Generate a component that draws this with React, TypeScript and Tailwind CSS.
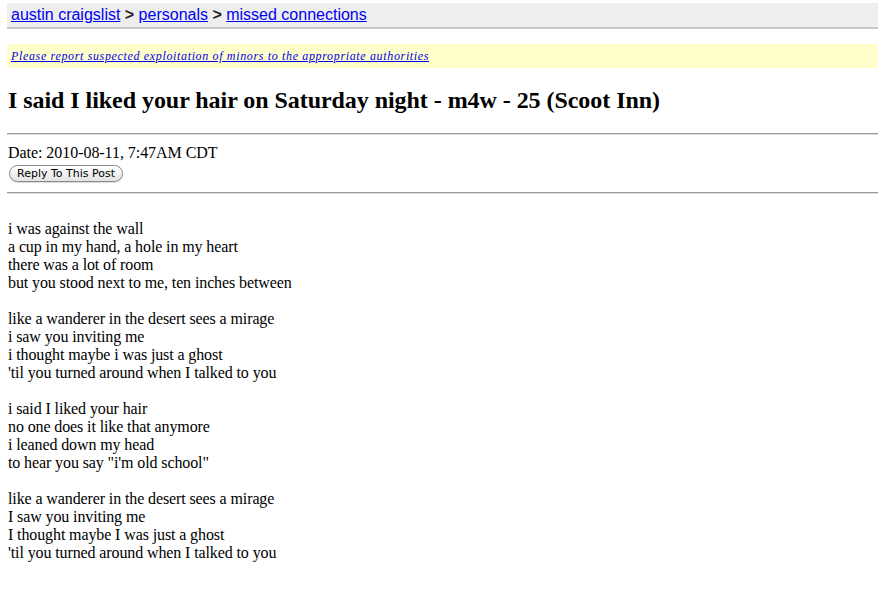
import React from "react";

const stanzas = [
  [
    "i was against the wall",
    "a cup in my hand, a hole in my heart",
    "there was a lot of room",
    "but you stood next to me, ten inches between",
  ],
  [
    "like a wanderer in the desert sees a mirage",
    "i saw you inviting me",
    "i thought maybe i was just a ghost",
    "'til you turned around when I talked to you",
  ],
  [
    "i said I liked your hair",
    "no one does it like that anymore",
    "i leaned down my head",
    'to hear you say "i\'m old school"',
  ],
  [
    "like a wanderer in the desert sees a mirage",
    "I saw you inviting me",
    "I thought maybe I was just a ghost",
    "'til you turned around when I talked to you",
  ],
];

export default function App() {
  return (
    <div className="min-h-[593px] bg-white pl-[7px] pt-[3px] text-black [font-family:'Liberation_Serif','Times_New_Roman',serif]">
      <div className="h-[26px] border-b-2 border-[#c8c8c8] bg-[#eeeeee] pl-[4px] text-[16px] leading-[24px] [font-family:'Liberation_Sans',Arial,sans-serif]">
        <a href="#" className="text-[#0000ee] underline">austin craigslist</a>
        <span className="font-bold text-[#222]"> &gt; </span>
        <a href="#" className="text-[#0000ee] underline">personals</a>
        <span className="font-bold text-[#222]"> &gt; </span>
        <a href="#" className="text-[#0000ee] underline">missed connections</a>
      </div>

      <div className="mt-[15px] h-[24px] bg-[#ffffcc] pl-[4px] text-[12px] leading-[24px] italic tracking-[0.65px]">
        <a href="#" className="text-[#0000ee] underline">
          Please report suspected exploitation of minors to the appropriate authorities
        </a>
      </div>

      <h2 className="mt-[18px] pl-[1px] text-[24px] font-bold leading-[28px] tracking-[-0.05px]">
        I said I liked your hair on Saturday night - m4w - 25 (Scoot Inn)
      </h2>

      <hr className="mt-[19px] border-0 border-t border-[#999] border-b border-b-[#ddd]" />

      <div className="mt-[9px] pl-[1px] text-[16px] leading-[18px] tracking-[-0.05px]">Date: 2010-08-11, 7:47AM CDT</div>
      <div className="mt-[3px] flex pl-[2px]">
        <button className="block h-[17px] rounded-full border border-[#8a8a8a] bg-gradient-to-b from-white to-[#e4e4e4] px-[7px] text-[11px] leading-[15px] text-black shadow-[0_1px_1px_rgba(0,0,0,0.15)] [font-family:'DejaVu_Sans','Liberation_Sans',sans-serif]">
          Reply To This Post
        </button>
      </div>

      <hr className="mt-[10px] border-0 border-t border-[#999] border-b border-b-[#ddd]" />

      <div className="mt-[26px] pl-[1px] text-[16px] leading-[18px] tracking-[-0.11px]">
        {stanzas.map((s, i) => (
          <div key={i} className={i > 0 ? "mt-[18px]" : ""}>
            {s.map((l, j) => (
              <div key={j}>{l}</div>
            ))}
          </div>
        ))}
      </div>
    </div>
  );
}
